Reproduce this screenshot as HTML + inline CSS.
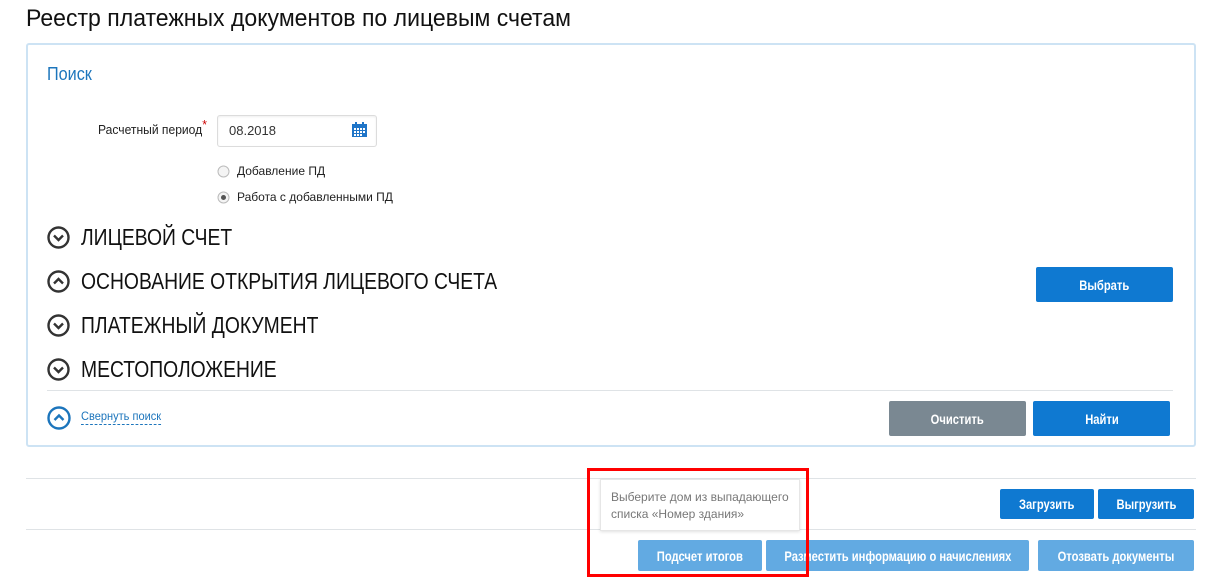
<!DOCTYPE html>
<html><head><meta charset="utf-8"><style>
*{box-sizing:border-box;margin:0;padding:0}
body{width:1206px;height:580px;background:#fff;font-family:"Liberation Sans",sans-serif;color:#222;position:relative;overflow:hidden}
.a{position:absolute;white-space:nowrap}
.btn{position:absolute;color:#fff;font-size:14px;font-weight:bold;display:flex;align-items:center;justify-content:center;border-radius:2px;white-space:nowrap}
.btn span{display:inline-block;transform:scaleX(.8)}
.blue{background:#0f79d1}
.lb{background:#62aae2}
.sec{position:absolute;left:47px;display:flex;align-items:center;font-size:23px;color:#111;white-space:nowrap}
.sec svg{margin-right:11px}
.sec span{display:inline-block;transform:scaleX(.84);transform-origin:left center}
.line{position:absolute;height:1px;background:#dfe3e6}
</style></head><body>
<div class="a" style="left:26px;top:5px;font-size:24px;color:#111;transform:scaleX(.96);transform-origin:left">Реестр платежных документов по лицевым счетам</div>
<div class="a" style="left:26px;top:43px;width:1170px;height:404px;border:2px solid #cde3f4;border-radius:3px"></div>
<div class="a" style="left:47px;top:64px;font-size:18px;color:#1c75bc;transform:scaleX(.9);transform-origin:left">Поиск</div>
<div class="a" style="left:98px;top:122px;font-size:13px;color:#222;transform:scaleX(.93);transform-origin:left">Расчетный период<span style="color:#c00;position:relative;top:-5px">*</span></div>
<div class="a" style="left:217px;top:115px;width:160px;height:32px;border:1px solid #dcdcdc;border-radius:3px;box-shadow:inset 0 1px 2px #eee"></div>
<div class="a" style="left:229px;top:123px;font-size:13px;color:#333">08.2018</div>
<svg class="a" style="left:352px;top:122px" width="15" height="15" viewBox="0 0 15 15"><rect x="0" y="2" width="15" height="13" fill="#1f75c8"/><rect x="3" y="0" width="2" height="4" fill="#1f75c8"/><rect x="10" y="0" width="2" height="4" fill="#1f75c8"/><g fill="#fff"><rect x="2" y="6" width="2" height="2"/><rect x="5" y="6" width="2" height="2"/><rect x="8" y="6" width="2" height="2"/><rect x="11" y="6" width="2" height="2"/><rect x="2" y="9" width="2" height="2"/><rect x="5" y="9" width="2" height="2"/><rect x="8" y="9" width="2" height="2"/><rect x="11" y="9" width="2" height="2"/><rect x="2" y="12" width="2" height="2"/><rect x="5" y="12" width="2" height="2"/><rect x="8" y="12" width="2" height="2"/></g></svg>
<svg class="a" style="left:217px;top:165px" width="13" height="13"><circle cx="6.5" cy="6.5" r="5.5" fill="#f4f4f4" stroke="#bbb"/></svg>
<div class="a" style="left:237px;top:164px;font-size:12px">Добавление ПД</div>
<svg class="a" style="left:217px;top:191px" width="13" height="13"><circle cx="6.5" cy="6.5" r="5.5" fill="#f4f4f4" stroke="#bbb"/><circle cx="6.5" cy="6.5" r="2.5" fill="#555"/></svg>
<div class="a" style="left:237px;top:190px;font-size:12px">Работа с добавленными ПД</div>

<div class="sec" style="top:224px"><svg width="23" height="23" viewBox="0 0 23 23"><circle cx="11.5" cy="11.5" r="10" fill="none" stroke="#333" stroke-width="2.4"/><path d="M7 9.5l4.5 4.5 4.5-4.5" fill="none" stroke="#333" stroke-width="2.4"/></svg><span>ЛИЦЕВОЙ СЧЕТ</span></div>
<div class="sec" style="top:268px"><svg width="23" height="23" viewBox="0 0 23 23"><circle cx="11.5" cy="11.5" r="10" fill="none" stroke="#333" stroke-width="2.4"/><path d="M7 13.5l4.5-4.5 4.5 4.5" fill="none" stroke="#333" stroke-width="2.4"/></svg><span>ОСНОВАНИЕ ОТКРЫТИЯ ЛИЦЕВОГО СЧЕТА</span></div>
<div class="sec" style="top:312px"><svg width="23" height="23" viewBox="0 0 23 23"><circle cx="11.5" cy="11.5" r="10" fill="none" stroke="#333" stroke-width="2.4"/><path d="M7 9.5l4.5 4.5 4.5-4.5" fill="none" stroke="#333" stroke-width="2.4"/></svg><span>ПЛАТЕЖНЫЙ ДОКУМЕНТ</span></div>
<div class="sec" style="top:356px"><svg width="23" height="23" viewBox="0 0 23 23"><circle cx="11.5" cy="11.5" r="10" fill="none" stroke="#333" stroke-width="2.4"/><path d="M7 9.5l4.5 4.5 4.5-4.5" fill="none" stroke="#333" stroke-width="2.4"/></svg><span>МЕСТОПОЛОЖЕНИЕ</span></div>
<div class="btn blue" style="left:1036px;top:267px;width:137px;height:35px"><span>Выбрать</span></div>
<div class="line" style="left:47px;top:390px;width:1126px"></div>
<svg class="a" style="left:47px;top:406px" width="24" height="24" viewBox="0 0 24 24"><circle cx="12" cy="12" r="10.5" fill="none" stroke="#1c75bc" stroke-width="2.4"/><path d="M7.5 14l4.5-4.5 4.5 4.5" fill="none" stroke="#1c75bc" stroke-width="2.4"/></svg>
<div class="a" style="left:81px;top:409px;font-size:12px;color:#1c75bc;border-bottom:1px dashed #1c75bc;padding-bottom:1px;transform:scaleX(.92);transform-origin:left">Свернуть поиск</div>
<div class="btn" style="left:889px;top:401px;width:137px;height:35px;background:#7a8892"><span>Очистить</span></div>
<div class="btn blue" style="left:1033px;top:401px;width:137px;height:35px"><span>Найти</span></div>

<div class="line" style="left:26px;top:478px;width:1170px"></div>
<div class="line" style="left:26px;top:529px;width:1170px"></div>
<div class="btn blue" style="left:1000px;top:489px;width:94px;height:30px"><span>Загрузить</span></div>
<div class="btn blue" style="left:1098px;top:489px;width:96px;height:30px"><span>Выгрузить</span></div>
<div class="btn lb" style="left:638px;top:540px;width:124px;height:31px"><span>Подсчет итогов</span></div>
<div class="btn lb" style="left:766px;top:540px;width:263px;height:31px"><span>Разместить информацию о начислениях</span></div>
<div class="btn lb" style="left:1038px;top:540px;width:156px;height:31px"><span>Отозвать документы</span></div>
<div class="a" style="left:600px;top:479px;width:200px;height:52px;background:#fff;border:1px solid #e6e6e6;box-shadow:0 1px 3px rgba(0,0,0,.12);font-size:12px;color:#777;padding:9px 0 0 10px;line-height:17px;white-space:normal">Выберите дом из выпадающего списка «Номер здания»</div>
<div class="a" style="left:587px;top:468px;width:222px;height:109px;border:3px solid #f00"></div>
</body></html>
